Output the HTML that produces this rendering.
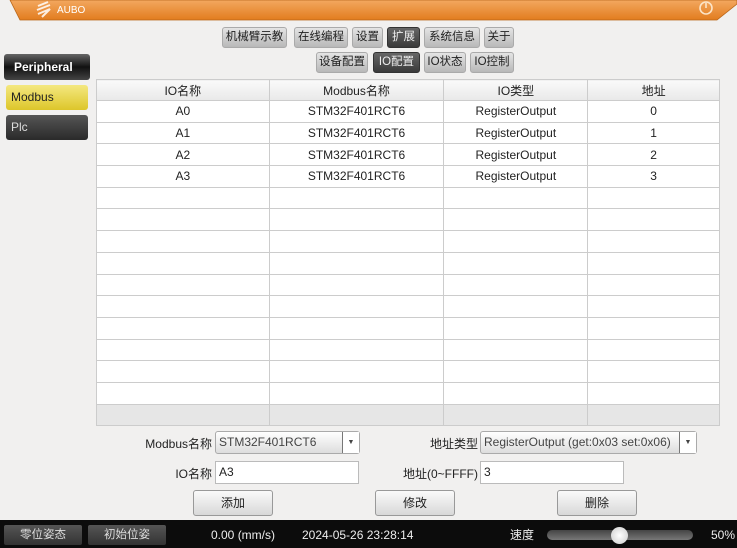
<!DOCTYPE html>
<html><head><meta charset="utf-8"><style>
*{box-sizing:border-box;margin:0;padding:0}
body{width:737px;height:548px;overflow:hidden;background:#f1f0ef;font-family:"Liberation Sans","Noto Sans CJK SC",sans-serif;position:relative;font-size:12px;color:#222}
.abs{position:absolute}
.btn{position:absolute;height:21px;border-radius:3px;background:linear-gradient(#e4e4e4,#b8b8b8);border:1px solid #aaa;font-size:11.5px;text-align:center;line-height:19px;color:#222}
.dk{background:linear-gradient(#666,#3a3a3a);color:#eee;border-color:#333}
table{position:absolute;left:96px;top:79px;width:624px;border-collapse:collapse;background:#fff;border:1px solid #aaa}
td{border:1px solid #ccc;height:21.7px;text-align:center;font-size:12px;padding:0}
tr.h td{background:linear-gradient(#fafafa,#e8e8e8);height:21px}
tr.g td{background:#e6e6e6}
.inp{position:absolute;height:23px;background:#fff;border:1px solid #bbb;font-size:12px;line-height:21px;padding-left:3px}
.cb{position:absolute;height:23px;border:1px solid #aaa;border-radius:3px;background:linear-gradient(#fff,#ddd);font-size:12px;line-height:21px;padding-left:3px;color:#444}
.cb i{position:absolute;right:0;top:0;width:17px;height:21px;border-left:1px solid #777;background:#fff;font-style:normal;font-size:7px;text-align:center;line-height:21px}
.lb{position:absolute;font-size:12px;text-align:right}
.pb{position:absolute;height:26px;border:1px solid #999;border-radius:3px;background:linear-gradient(#fafafa,#d8d8d8);text-align:center;line-height:24px;font-size:12px}
.fb{position:absolute;top:525px;height:20px;border-radius:2px;background:linear-gradient(#555,#333);color:#ddd;text-align:center;line-height:20px;font-size:11.5px}
.ft{position:absolute;top:528px;color:#eee;font-size:12px;line-height:15px}
</style></head><body>
<svg class="abs" style="left:0;top:0" width="737" height="22"><defs><linearGradient id="o" x1="0" y1="0" x2="0" y2="1"><stop offset="0" stop-color="#f3a860"/><stop offset="1" stop-color="#e27c1e"/></linearGradient></defs><polygon points="10,0 737,0 737,4 717,20 20,20" fill="url(#o)" stroke="#b86418" stroke-width="0.8"/>
<path d="M38 6 L48 2 M37 10 L50 5 M38 14 L50 9 L42 17" stroke="#fff" stroke-width="2" fill="none" opacity=".85"/>
<circle cx="706" cy="8" r="6" fill="none" stroke="#fbe4c8" stroke-width="1.6"/><path d="M706 3v5" stroke="#fbe4c8" stroke-width="1.6"/></svg>
<div class="abs" style="left:57px;top:5px;color:#fff;font-size:10px">AUBO</div>
<div class="btn" style="left:222px;top:27px;width:65px">机械臂示教</div>
<div class="btn" style="left:294px;top:27px;width:54px">在线编程</div>
<div class="btn" style="left:352px;top:27px;width:31px">设置</div>
<div class="btn dk" style="left:387px;top:27px;width:33px">扩展</div>
<div class="btn" style="left:424px;top:27px;width:56px">系统信息</div>
<div class="btn" style="left:484px;top:27px;width:30px">关于</div>
<div class="btn" style="left:316px;top:52px;width:52px">设备配置</div>
<div class="btn dk" style="left:373px;top:52px;width:47px">IO配置</div>
<div class="btn" style="left:424px;top:52px;width:42px">IO状态</div>
<div class="btn" style="left:470px;top:52px;width:44px">IO控制</div>
<div class="abs" style="left:4px;top:54px;width:86px;height:26px;border-radius:3px;background:linear-gradient(#666,#111 50%,#444);color:#fff;font-weight:bold;line-height:26px;padding-left:10px;font-size:12px">Peripheral</div>
<div class="abs" style="left:6px;top:85px;width:82px;height:25px;border-radius:3px;background:linear-gradient(#f4e880,#ddc62a);line-height:25px;padding-left:5px;font-size:12px">Modbus</div>
<div class="abs" style="left:6px;top:115px;width:82px;height:25px;border-radius:3px;background:linear-gradient(#555,#2a2a2a);color:#ddd;line-height:25px;padding-left:5px;font-size:12px">Plc</div>
<table>
<colgroup><col style="width:173px"><col style="width:175px"><col style="width:144px"><col style="width:132px"></colgroup>
<tr class="h"><td>IO名称</td><td>Modbus名称</td><td>IO类型</td><td>地址</td></tr>
<tr><td>A0</td><td>STM32F401RCT6</td><td>RegisterOutput</td><td>0</td></tr>
<tr><td>A1</td><td>STM32F401RCT6</td><td>RegisterOutput</td><td>1</td></tr>
<tr><td>A2</td><td>STM32F401RCT6</td><td>RegisterOutput</td><td>2</td></tr>
<tr><td>A3</td><td>STM32F401RCT6</td><td>RegisterOutput</td><td>3</td></tr>
<tr><td></td><td></td><td></td><td></td></tr><tr><td></td><td></td><td></td><td></td></tr>
<tr><td></td><td></td><td></td><td></td></tr><tr><td></td><td></td><td></td><td></td></tr>
<tr><td></td><td></td><td></td><td></td></tr><tr><td></td><td></td><td></td><td></td></tr>
<tr><td></td><td></td><td></td><td></td></tr><tr><td></td><td></td><td></td><td></td></tr>
<tr><td></td><td></td><td></td><td></td></tr><tr><td></td><td></td><td></td><td></td></tr>
<tr class="g"><td></td><td></td><td></td><td></td></tr>
</table>
<div class="lb" style="left:130px;top:435px;width:82px">Modbus名称</div>
<div class="cb" style="left:215px;top:431px;width:145px">STM32F401RCT6<i>▼</i></div>
<div class="lb" style="left:400px;top:435px;width:78px">地址类型</div>
<div class="cb" style="left:480px;top:431px;width:217px">RegisterOutput (get:0x03 set:0x06)<i>▼</i></div>
<div class="lb" style="left:140px;top:465px;width:72px">IO名称</div>
<div class="inp" style="left:215px;top:461px;width:144px">A3</div>
<div class="lb" style="left:380px;top:465px;width:98px">地址(0~FFFF)</div>
<div class="inp" style="left:480px;top:461px;width:144px">3</div>
<div class="pb" style="left:193px;top:490px;width:80px">添加</div>
<div class="pb" style="left:375px;top:490px;width:80px">修改</div>
<div class="pb" style="left:557px;top:490px;width:80px">删除</div>
<div class="abs" style="left:0;top:520px;width:737px;height:28px;background:#0c0c0c"></div>
<div class="fb" style="left:4px;width:78px">零位姿态</div>
<div class="fb" style="left:88px;width:78px">初始位姿</div>
<div class="ft" style="left:211px">0.00 (mm/s)</div>
<div class="ft" style="left:302px">2024-05-26 23:28:14</div>
<div class="ft" style="left:510px">速度</div>
<div class="abs" style="left:547px;top:530px;width:146px;height:10px;border-radius:5px;background:linear-gradient(#444,#777)"></div>
<div class="abs" style="left:611px;top:527px;width:17px;height:17px;border-radius:50%;background:radial-gradient(#fff,#ccc)"></div>
<div class="ft" style="left:711px">50%</div>
</body></html>
